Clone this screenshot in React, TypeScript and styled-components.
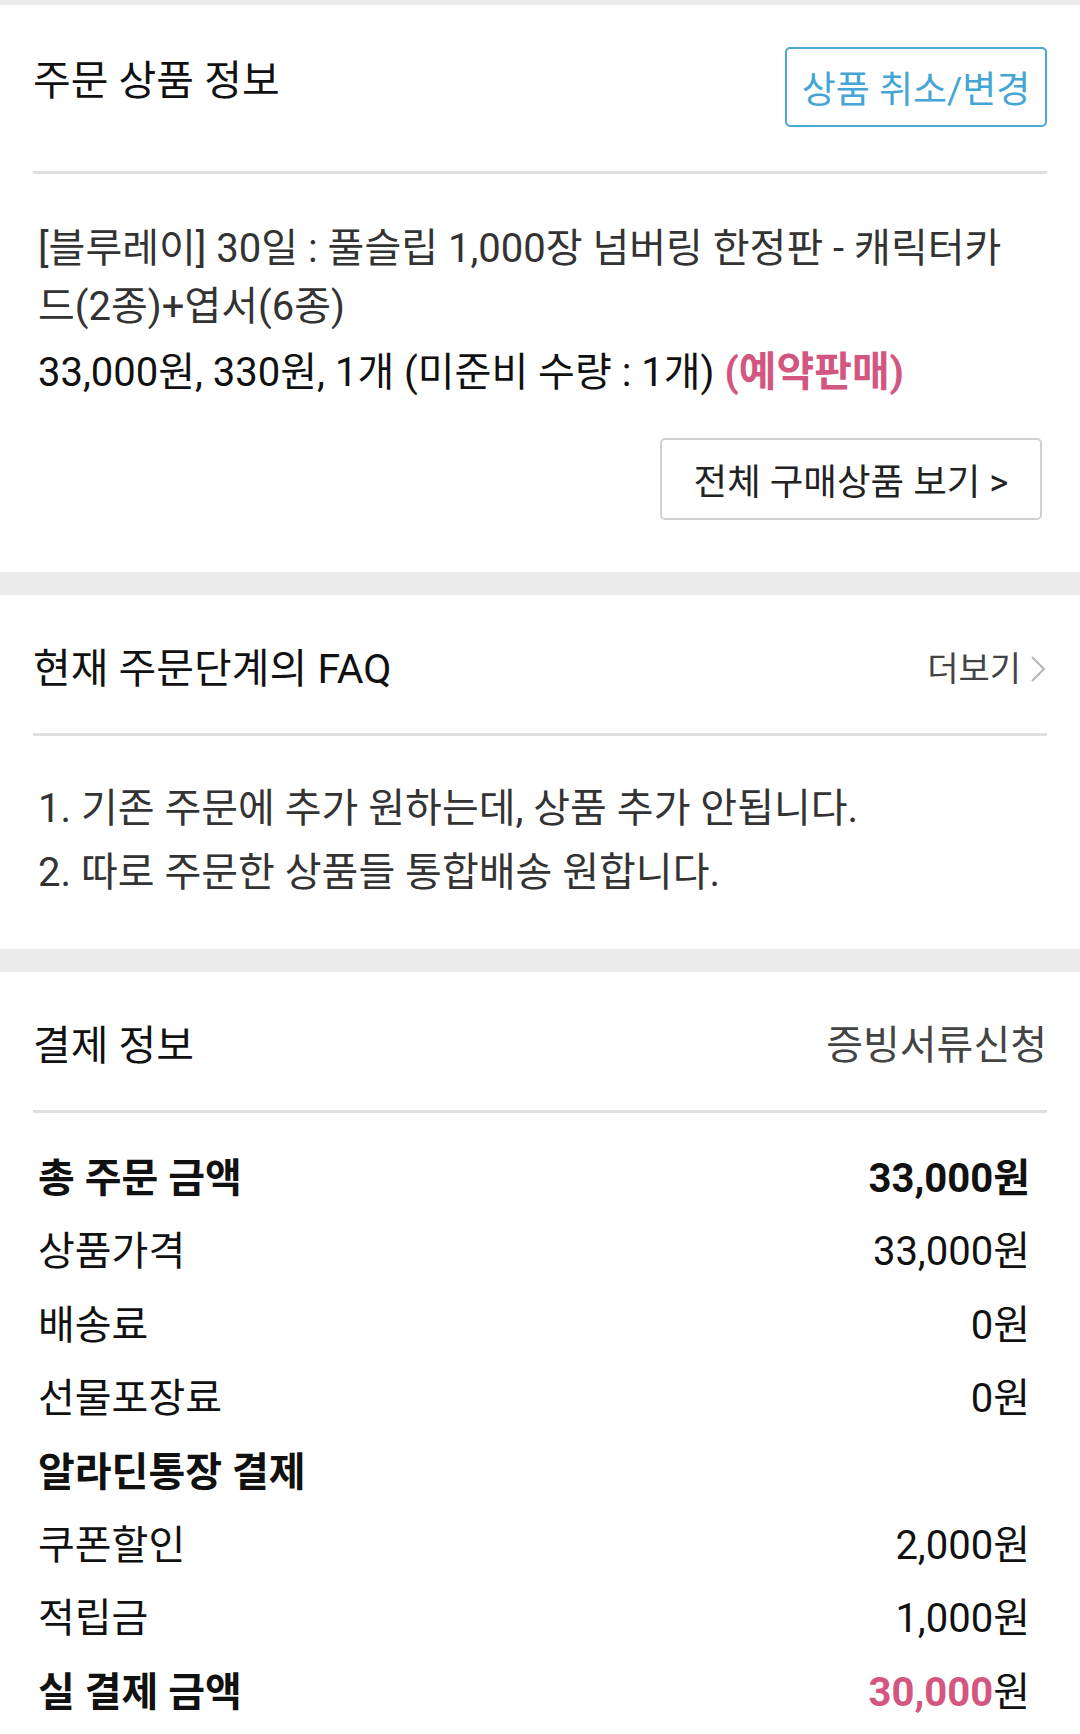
import styled, { createGlobalStyle } from "styled-components";
import { FunctionComponent } from "react";

const GlobalStyle = createGlobalStyle`
  html, body {
    margin: 0;
    padding: 0;
    background: #ebebeb;
  }
  body {
    font-family: Roboto, "Noto Sans CJK KR", sans-serif;
    color: #111;
  }
`;

const Page = styled.main`
  display: flex;
  flex-direction: column;
  gap: 23px;
  padding-top: 5px;
`;

const Section = styled.section`
  background: #fff;
  padding: 0 33px;
`;

const Header = styled.header<{ $tall?: boolean }>`
  display: flex;
  justify-content: space-between;
  align-items: center;
  padding: ${({ $tall }) => ($tall ? "42px 0 44px" : "49px 0 39px")};
  border-bottom: 3px solid #e0e0e0;
`;

const Title = styled.h2<{ $lift?: boolean }>`
  margin: 0 0 ${({ $lift }) => ($lift ? "13px" : "0")};
  font-size: 41px;
  line-height: 50px;
  font-weight: 400;
  color: #111;
`;

const OutlineButton = styled.button`
  width: 262px;
  height: 80px;
  padding: 0;
  border: 2.5px solid #4aa9d6;
  border-radius: 5px;
  background: #fff;
  color: #45a6d6;
  font-family: inherit;
  font-size: 37px;
`;

const HeaderLink = styled.a<{ $large?: boolean }>`
  display: flex;
  align-items: center;
  gap: 8px;
  font-size: ${({ $large }) => ($large ? "40px" : "34px")};
  line-height: 50px;
  color: #444;
  text-decoration: none;
  svg {
    width: 18px;
    height: 30px;
  }
`;

const Product = styled.div`
  padding: 46px 5px 52px;
`;

const ProductName = styled.p`
  margin: 0;
  padding-right: 12px;
  font-size: 40px;
  line-height: 58px;
  color: #333;
`;

const ProductMeta = styled.p`
  margin: 7px 0 0;
  font-size: 40px;
  line-height: 58px;
  color: #111;
  strong {
    color: #d2567f;
    font-weight: 700;
    font-size: 41px;
  }
`;

const ButtonRow = styled.div`
  display: flex;
  justify-content: flex-end;
  margin-top: 36px;
`;

const GhostButton = styled.button`
  width: 382px;
  height: 82px;
  border: 2px solid #d0d0d0;
  border-radius: 5px;
  background: #fff;
  color: #222;
  font-family: inherit;
  font-size: 36.5px;
`;

const FaqList = styled.ol`
  list-style: none;
  margin: 0;
  padding: 41px 5px 44px;
  li {
    font-size: 40px;
    line-height: 64px;
    color: #333;
  }
`;

const Rows = styled.div`
  padding: 29px 17px 20px 5px;
`;

const Row = styled.div<{ $bold?: boolean }>`
  display: flex;
  justify-content: space-between;
  font-size: 40px;
  line-height: 73.4px;
  font-weight: ${({ $bold }) => ($bold ? 700 : 400)};
  color: #111;
  em {
    font-style: normal;
    color: #d2567f;
  }
  em + span {
    font-weight: 400;
  }
`;

const Chevron = () => (
  <svg viewBox="0 0 18 30" fill="none">
    <path d="M3 3 L15 15 L3 27" stroke="#b5b5b5" strokeWidth="2" />
  </svg>
);

type Payment = { label: string; value?: string; bold?: boolean; accent?: boolean };

const payments: Payment[] = [
  { label: "총 주문 금액", value: "33,000", bold: true },
  { label: "상품가격", value: "33,000" },
  { label: "배송료", value: "0" },
  { label: "선물포장료", value: "0" },
  { label: "알라딘통장 결제", bold: true },
  { label: "쿠폰할인", value: "2,000" },
  { label: "적립금", value: "1,000" },
  { label: "실 결제 금액", value: "30,000", bold: true, accent: true },
];

const App: FunctionComponent = () => {
  return (
    <>
      <GlobalStyle />
      <Page>
        <Section>
          <Header $tall>
            <Title $lift>주문 상품 정보</Title>
            <OutlineButton>상품 취소/변경</OutlineButton>
          </Header>
          <Product>
            <ProductName>
              [블루레이] 30일 : 풀슬립 1,000장 넘버링 한정판 - 캐릭터카드(2종)+엽서(6종)
            </ProductName>
            <ProductMeta>
              33,000원, 330원, 1개 (미준비 수량 : 1개) <strong>(예약판매)</strong>
            </ProductMeta>
            <ButtonRow>
              <GhostButton>전체 구매상품 보기 &gt;</GhostButton>
            </ButtonRow>
          </Product>
        </Section>

        <Section>
          <Header>
            <Title>현재 주문단계의 FAQ</Title>
            <HeaderLink href="#">
              더보기
              <Chevron />
            </HeaderLink>
          </Header>
          <FaqList>
            <li>1. 기존 주문에 추가 원하는데, 상품 추가 안됩니다.</li>
            <li>2. 따로 주문한 상품들 통합배송 원합니다.</li>
          </FaqList>
        </Section>

        <Section>
          <Header>
            <Title>결제 정보</Title>
            <HeaderLink href="#" $large>
              증빙서류신청
            </HeaderLink>
          </Header>
          <Rows>
            {payments.map((p) => (
              <Row key={p.label} $bold={p.bold}>
                <span>{p.label}</span>
                {p.value !== undefined &&
                  (p.accent ? (
                    <span>
                      <em>{p.value}</em>
                      <span>원</span>
                    </span>
                  ) : (
                    <span>{p.value}원</span>
                  ))}
              </Row>
            ))}
          </Rows>
        </Section>
      </Page>
    </>
  );
};

export default App;
